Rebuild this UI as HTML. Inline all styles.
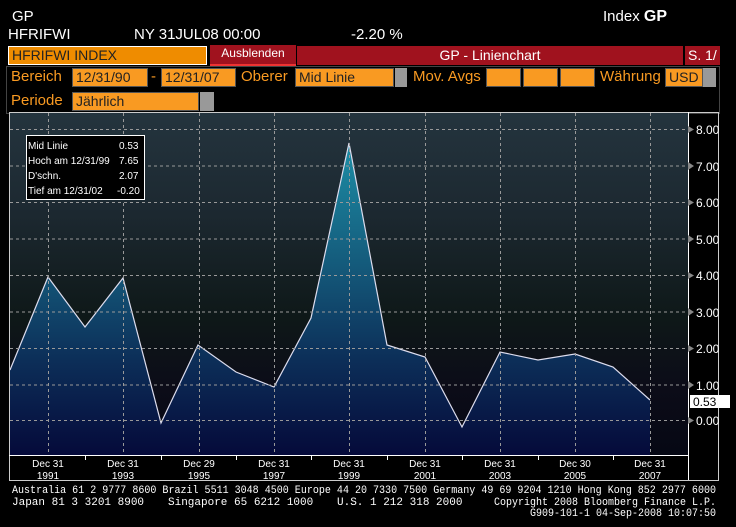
<!DOCTYPE html>
<html><head><meta charset="utf-8"><style>
body{margin:0;width:736px;height:527px;background:#000;overflow:hidden;font-family:"Liberation Sans",sans-serif;color:#fff;position:relative}
.a{position:absolute;white-space:nowrap}
.or{position:absolute;background:#f99a22;color:#222;font-size:14px;line-height:17px;padding-left:3px;box-sizing:border-box;border:1px solid #555}
.gr{position:absolute;background:#999}
.lb{position:absolute;color:#f99a22;font-size:15px;line-height:18px}
</style></head><body>
<div class="a" style="left:12px;top:8px;font-size:15px">GP</div>
<div class="a" style="left:603px;top:8px;font-size:15px">Index <b style="font-size:16px">GP</b></div>
<div class="a" style="left:8px;top:26px;font-size:15px">HFRIFWI</div>
<div class="a" style="left:134px;top:26px;font-size:15px">NY 31JUL08 00:00</div>
<div class="a" style="left:351px;top:26px;font-size:15px">-2.20 %</div>
<div class="or" style="left:8px;top:46px;width:199px;height:19px;background:#ef8c00;border-color:#fff">HFRIFWI INDEX</div>
<div class="a" style="left:210px;top:45px;width:86px;height:19px;background:#a0121e;border-bottom:2px solid #e33;font-size:12px;line-height:16px;text-align:center">Ausblenden</div>
<div class="a" style="left:297px;top:46px;width:386px;height:19px;background:#a0121e;font-size:14px;line-height:19px;text-align:center">GP - Linienchart</div>
<div class="a" style="left:685px;top:46px;width:35px;height:19px;background:#a0121e;font-size:14px;line-height:19px;padding-left:3px;box-sizing:border-box">S. 1/</div>
<div class="a" style="left:6px;top:66px;width:712px;height:46px;border:1px solid #444"></div>
<div class="lb" style="left:11px;top:68px">Bereich</div>
<div class="or" style="left:72px;top:68px;width:76px;height:19px">12/31/90</div>
<div class="lb" style="left:151px;top:68px">-</div>
<div class="or" style="left:161px;top:68px;width:75px;height:19px">12/31/07</div>
<div class="lb" style="left:241px;top:68px">Oberer</div>
<div class="or" style="left:295px;top:68px;width:99px;height:19px">Mid Linie</div><div class="gr" style="left:395px;top:68px;width:12px;height:19px"></div>
<div class="lb" style="left:413px;top:68px">Mov. Avgs</div>
<div class="or" style="left:486px;top:68px;width:35px;height:19px"></div>
<div class="or" style="left:523px;top:68px;width:35px;height:19px"></div>
<div class="or" style="left:560px;top:68px;width:35px;height:19px"></div>
<div class="lb" style="left:600px;top:68px">Währung</div>
<div class="or" style="left:665px;top:68px;width:38px;height:19px">USD</div><div class="gr" style="left:703px;top:68px;width:13px;height:19px"></div>
<div class="lb" style="left:11px;top:92px">Periode</div>
<div class="or" style="left:72px;top:92px;width:127px;height:19px">Jährlich</div><div class="gr" style="left:200px;top:92px;width:14px;height:19px"></div>
<svg class="a" style="left:0;top:0" width="736" height="527">
<defs>
<linearGradient id="bg" x1="0" y1="113" x2="0" y2="455" gradientUnits="userSpaceOnUse">
<stop offset="0" stop-color="#24343e"/><stop offset="0.3" stop-color="#1c2830"/><stop offset="0.6" stop-color="#0e1818"/><stop offset="0.8" stop-color="#0c0c18"/><stop offset="1" stop-color="#060814"/></linearGradient>
<linearGradient id="fl" x1="0" y1="143" x2="0" y2="455" gradientUnits="userSpaceOnUse">
<stop offset="0" stop-color="#1d8ea6"/><stop offset="0.4" stop-color="#14597a"/><stop offset="0.7" stop-color="#0c2e58"/><stop offset="1" stop-color="#050a3a"/></linearGradient>
</defs>
<rect x="10" y="113" width="678" height="342" fill="url(#bg)"/>
<polygon fill="url(#fl)" points="10,455 10,370 48,277 85,327 123,278 161,423 198,345 236,372 274,387 311,318 349,143 387,345 425,357 462,427 500,352 538,360 575,354 613,367 650,400 650,455"/>
<polyline fill="none" stroke="#dde" stroke-width="1.2" points="10,370 48,277 85,327 123,278 161,423 198,345 236,372 274,387 311,318 349,143 387,345 425,357 462,427 500,352 538,360 575,354 613,367 650,400"/>
<g stroke="#999" stroke-dasharray="3,3" stroke-width="1">
<line x1="10" x2="688" y1="129.5" y2="129.5"/><line x1="10" x2="688" y1="166" y2="166"/><line x1="10" x2="688" y1="202.5" y2="202.5"/><line x1="10" x2="688" y1="239" y2="239"/><line x1="10" x2="688" y1="275.5" y2="275.5"/><line x1="10" x2="688" y1="312" y2="312"/><line x1="10" x2="688" y1="348.5" y2="348.5"/><line x1="10" x2="688" y1="385" y2="385"/><line x1="10" x2="688" y1="420.5" y2="420.5"/>
<line y1="113" y2="455" x1="48.5" x2="48.5"/><line y1="113" y2="455" x1="123.5" x2="123.5"/><line y1="113" y2="455" x1="199.5" x2="199.5"/><line y1="113" y2="455" x1="274.5" x2="274.5"/><line y1="113" y2="455" x1="349.5" x2="349.5"/><line y1="113" y2="455" x1="425.5" x2="425.5"/><line y1="113" y2="455" x1="500.5" x2="500.5"/><line y1="113" y2="455" x1="575.5" x2="575.5"/><line y1="113" y2="455" x1="650.5" x2="650.5"/>
</g>
<rect x="9.5" y="112.5" width="709" height="368" fill="none" stroke="#ccc"/>
<line x1="688.5" y1="112" x2="688.5" y2="480" stroke="#fff"/>
<line x1="9" y1="455.5" x2="688" y2="455.5" stroke="#fff"/>
<g fill="#888">
<polygon points="688,126 694,129.5 688,133"/><polygon points="688,162 694,166 688,170"/><polygon points="688,199 694,202.5 688,206"/><polygon points="688,235 694,239 688,243"/><polygon points="688,272 694,275.5 688,279"/><polygon points="688,308 694,312 688,316"/><polygon points="688,345 694,348.5 688,352"/><polygon points="688,381 694,385 688,389"/><polygon points="688,417 694,420.5 688,424"/>
</g>
<g fill="#fff" font-size="12" font-family="Liberation Sans">
<text x="696" y="134">8.00</text><text x="696" y="171">7.00</text><text x="696" y="207">6.00</text><text x="696" y="244">5.00</text><text x="696" y="280">4.00</text><text x="696" y="317">3.00</text><text x="696" y="353">2.00</text><text x="696" y="390">1.00</text><text x="696" y="425">0.00</text>
</g>
<rect x="690" y="395" width="40" height="13" fill="#fff"/>
<text x="693" y="406" font-size="12" fill="#000">0.53</text>
<g stroke="#fff"><line x1="85.5" x2="85.5" y1="455" y2="460"/><line x1="161.5" x2="161.5" y1="455" y2="460"/><line x1="236.5" x2="236.5" y1="455" y2="460"/><line x1="311.5" x2="311.5" y1="455" y2="460"/><line x1="387.5" x2="387.5" y1="455" y2="460"/><line x1="462.5" x2="462.5" y1="455" y2="460"/><line x1="538.5" x2="538.5" y1="455" y2="460"/><line x1="613.5" x2="613.5" y1="455" y2="460"/></g>
<g fill="#fff" font-size="10" text-anchor="middle">
<text x="48" y="467">Dec 31</text><text x="48" y="479">1991</text>
<text x="123" y="467">Dec 31</text><text x="123" y="479">1993</text>
<text x="199" y="467">Dec 29</text><text x="199" y="479">1995</text>
<text x="274" y="467">Dec 31</text><text x="274" y="479">1997</text>
<text x="349" y="467">Dec 31</text><text x="349" y="479">1999</text>
<text x="425" y="467">Dec 31</text><text x="425" y="479">2001</text>
<text x="500" y="467">Dec 31</text><text x="500" y="479">2003</text>
<text x="575" y="467">Dec 30</text><text x="575" y="479">2005</text>
<text x="650" y="467">Dec 31</text><text x="650" y="479">2007</text>
</g>
<rect x="26.5" y="135.5" width="118" height="64" fill="#000" stroke="#fff"/>
<g fill="#fff" font-size="10">
<text x="28" y="149">Mid Linie</text><text x="119" y="149">0.53</text>
<text x="28" y="164">Hoch am 12/31/99</text><text x="119" y="164">7.65</text>
<text x="28" y="179">D'schn.</text><text x="119" y="179">2.07</text>
<text x="28" y="194">Tief am 12/31/02</text><text x="117" y="194">-0.20</text>
</g>
<g fill="#fff" font-size="11" font-family="Liberation Mono">
<text x="12" y="493" textLength="704" lengthAdjust="spacingAndGlyphs">Australia 61 2 9777 8600 Brazil 5511 3048 4500 Europe 44 20 7330 7500 Germany 49 69 9204 1210 Hong Kong 852 2977 6000</text>
<text x="12" y="505">Japan 81 3 3201 8900</text><text x="168" y="505">Singapore 65 6212 1000</text><text x="337" y="505">U.S. 1 212 318 2000</text>
<text x="494" y="505" textLength="222" lengthAdjust="spacingAndGlyphs">Copyright 2008 Bloomberg Finance L.P.</text>
<text x="530" y="516" textLength="186" lengthAdjust="spacingAndGlyphs">G909-101-1 04-Sep-2008 10:07:50</text>
</g>
</svg>
</body></html>
